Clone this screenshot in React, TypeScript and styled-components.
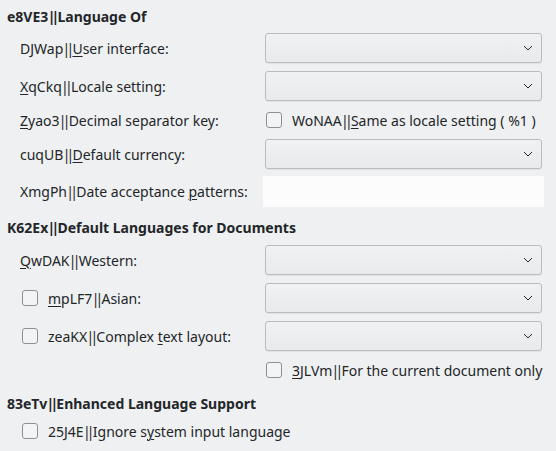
import { FC, ReactNode } from 'react'
import styled, { createGlobalStyle } from 'styled-components'

const GlobalStyle = createGlobalStyle`
  html, body {
    margin: 0;
    padding: 0;
    background: #eff0f1;
  }
  body {
    font-family: 'Noto Sans', 'Liberation Sans', sans-serif;
    font-size: 14px;
    color: #232629;
  }
`

const Page = styled.div`
  width: 556px;
  height: 451px;
  box-sizing: border-box;
  padding: 5px 14px 0 7px;
  overflow: hidden;
`

const Heading = styled.div<{ $top: number; $bottom: number }>`
  height: 24px;
  line-height: 24px;
  font-weight: bold;
  margin-top: ${p => p.$top}px;
  margin-bottom: ${p => p.$bottom}px;
`

const Grid = styled.div`
  display: grid;
  grid-template-columns: 232px 277px;
  column-gap: 13px;
  padding-left: 13px;
`

const Row = styled.div<{ $h: number; $gap?: number }>`
  display: contents;
  & > * {
    height: ${p => p.$h}px;
    margin-bottom: ${p => p.$gap ?? 8}px;
  }
`

const Label = styled.div`
  display: flex;
  align-items: center;
  white-space: nowrap;
`

const Mn = styled.u`
  text-underline-offset: 2px;
  text-decoration-thickness: 1px;
`

// the double bar is drawn much tighter in the reference font
const Sep = styled.span`
  letter-spacing: -3.8px;
  margin-left: -0.7px;
  margin-right: 2px;
`

const Combo = styled.div`
  box-sizing: border-box;
  border: 1px solid #babcbe;
  border-radius: 3px;
  background: linear-gradient(#f0f1f2, #e9eaeb);
  box-shadow: 0 1px 1px rgba(0, 0, 0, 0.06);
  display: flex;
  align-items: center;
  justify-content: flex-end;
  padding-right: 8px;
`

const TextField = styled.div`
  box-sizing: border-box;
  background: #fcfcfc;
  margin-left: -2px;
  width: 281px;
`

const Check = styled.span`
  box-sizing: border-box;
  width: 16px;
  height: 16px;
  border: 1px solid #8e9194;
  border-radius: 3px;
  background: #f3f4f5;
  flex: none;
`

const CheckItem = styled.div<{ $indent?: number }>`
  display: flex;
  align-items: center;
  gap: 10px;
  white-space: nowrap;
  padding-left: ${p => p.$indent ?? 1}px;
`

const Chevron: FC = () => (
  <svg width="10" height="6" viewBox="0 0 10 6">
    <path d="M1 1 L5 5 L9 1" fill="none" stroke="#232629" strokeWidth="1" />
  </svg>
)

const Text: FC<{ id: string; children: ReactNode }> = ({ id, children }) => (
  <span>
    {id}
    <Sep>||</Sep>
    {children}
  </span>
)

const CheckLabel: FC<{ id: string; children: ReactNode; indent?: number }> = ({ id, children, indent }) => (
  <CheckItem $indent={indent}>
    <Check />
    <Text id={id}>{children}</Text>
  </CheckItem>
)

const App: FC = () => {
  return (
    <>
      <GlobalStyle />
      <Page>
        <Heading $top={0} $bottom={4}><Text id="e8VE3">Language Of</Text></Heading>
        <Grid>
          <Row $h={30}>
            <Label><Text id="DJWap"><Mn>U</Mn>ser interface:</Text></Label>
            <Combo><Chevron /></Combo>
          </Row>
          <Row $h={30}>
            <Label><span><Mn>X</Mn>qCkq<Sep>||</Sep>Locale setting:</span></Label>
            <Combo><Chevron /></Combo>
          </Row>
          <Row $h={22}>
            <Label><span><Mn>Z</Mn>yao3<Sep>||</Sep>Decimal separator key:</span></Label>
            <CheckLabel id="WoNAA"><Mn>S</Mn>ame as locale setting ( %1 )</CheckLabel>
          </Row>
          <Row $h={30} $gap={7}>
            <Label><Text id="cuqUB"><Mn>D</Mn>efault currency:</Text></Label>
            <Combo><Chevron /></Combo>
          </Row>
          <Row $h={31} $gap={0}>
            <Label><Text id="XmgPh">Date acceptance <Mn>p</Mn>atterns:</Text></Label>
            <TextField />
          </Row>
        </Grid>

        <Heading $top={9} $bottom={5}><Text id="K62Ex">Default Languages for Documents</Text></Heading>
        <Grid>
          <Row $h={30}>
            <Label><span><Mn>Q</Mn>wDAK<Sep>||</Sep>Western:</span></Label>
            <Combo><Chevron /></Combo>
          </Row>
          <Row $h={30}>
            <CheckItem $indent={2}>
              <Check />
              <span><Mn>m</Mn>pLF7<Sep>||</Sep>Asian:</span>
            </CheckItem>
            <Combo><Chevron /></Combo>
          </Row>
          <Row $h={30}>
            <CheckLabel id="zeaKX" indent={2}>Complex <Mn>t</Mn>ext layout:</CheckLabel>
            <Combo><Chevron /></Combo>
          </Row>
          <Row $h={22} $gap={0}>
            <span />
            <CheckItem $indent={1}>
              <Check />
              <span><Mn>3</Mn>JLVm<Sep>||</Sep>For the current document only</span>
            </CheckItem>
          </Row>
        </Grid>

        <Heading $top={11} $bottom={4}><Text id="83eTv">Enhanced Language Support</Text></Heading>
        <Grid>
          <Row $h={22} $gap={0}>
            <CheckLabel id="25J4E" indent={2}>Ignore s<Mn>y</Mn>stem input language</CheckLabel>
          </Row>
        </Grid>
      </Page>
    </>
  )
}

export default App
